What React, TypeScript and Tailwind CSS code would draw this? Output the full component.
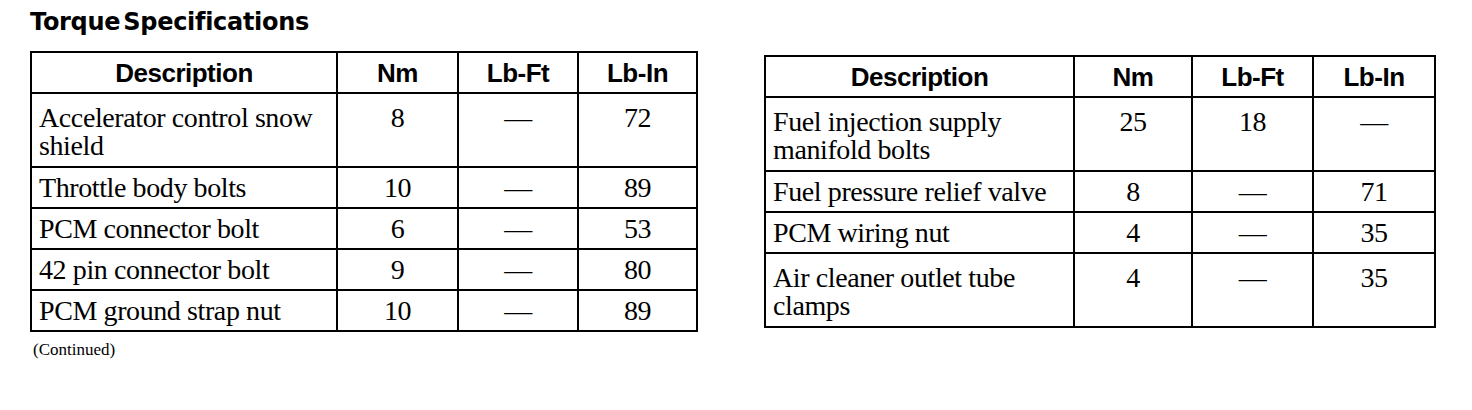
import React from 'react';

type Row = { desc: string[]; nm: string; ft: string; inch: string };

const leftRows: Row[] = [
  { desc: ['Accelerator control snow', 'shield'], nm: '8', ft: '—', inch: '72' },
  { desc: ['Throttle body bolts'], nm: '10', ft: '—', inch: '89' },
  { desc: ['PCM connector bolt'], nm: '6', ft: '—', inch: '53' },
  { desc: ['42 pin connector bolt'], nm: '9', ft: '—', inch: '80' },
  { desc: ['PCM ground strap nut'], nm: '10', ft: '—', inch: '89' },
];

const rightRows: Row[] = [
  { desc: ['Fuel injection supply', 'manifold bolts'], nm: '25', ft: '18', inch: '—' },
  { desc: ['Fuel pressure relief valve'], nm: '8', ft: '—', inch: '71' },
  { desc: ['PCM wiring nut'], nm: '4', ft: '—', inch: '35' },
  { desc: ['Air cleaner outlet tube', 'clamps'], nm: '4', ft: '—', inch: '35' },
];

const serif = "font-['Liberation_Serif','Times_New_Roman',serif]";
const sans = "font-['Liberation_Sans',Arial,sans-serif]";

const SpecTable = ({ rows, widths }: { rows: Row[]; widths: number[] }) => {
  return (
    <table className="border-collapse border-2 border-black text-black table-fixed">
      <colgroup>
        {widths.map((w, i) => (
          <col key={i} style={{ width: w }} />
        ))}
      </colgroup>
      <thead>
        <tr className={`h-[41px] ${sans} text-[26px] font-bold leading-[28px] tracking-[-0.5px]`}>
          <th className="border-2 border-black text-center align-middle">Description</th>
          <th className="border-2 border-black text-center align-middle">Nm</th>
          <th className="border-2 border-black text-center align-middle">Lb-Ft</th>
          <th className="border-2 border-black text-center align-middle">Lb-In</th>
        </tr>
      </thead>
      <tbody className={`${serif} text-[28px] leading-[28px] tracking-[-0.4px]`}>
        {rows.map((r, i) => {
          const tall = r.desc.length > 1;
          const pad = tall ? 'pt-[10px] pb-[6px] align-top' : 'pt-[6px] pb-[5px] align-middle';
          return (
            <tr key={i}>
              <td className={`border-2 border-black pl-[7px] pr-1 ${pad}`}>
                {r.desc.map((line, j) => (
                  <div key={j} className="whitespace-nowrap">{line}</div>
                ))}
              </td>
              <td className={`border-2 border-black text-center ${pad}`}>{r.nm}</td>
              <td className={`border-2 border-black text-center ${pad}`}>{r.ft}</td>
              <td className={`border-2 border-black text-center ${pad}`}>{r.inch}</td>
            </tr>
          );
        })}
      </tbody>
    </table>
  );
};

export default function App() {
  return (
    <div className="w-[1472px] h-[410px] bg-white px-[30px] pt-[8px] text-black">
      <h2 className="font-['DejaVu_Sans',sans-serif] font-bold text-[24px] leading-[29px] tracking-[-0.3px] [word-spacing:-5px]">
        Torque Specifications
      </h2>
      <div className="flex items-start gap-[66px] mt-[14px]">
        <div>
          <SpecTable rows={leftRows} widths={[306, 121, 120, 119]} />
          <p className={`${serif} text-[17px] leading-[20px] mt-[8px] ml-[3px]`}>(Continued)</p>
        </div>
        <div className="mt-[4px]">
          <SpecTable rows={rightRows} widths={[309, 118, 121, 122]} />
        </div>
      </div>
    </div>
  );
}
